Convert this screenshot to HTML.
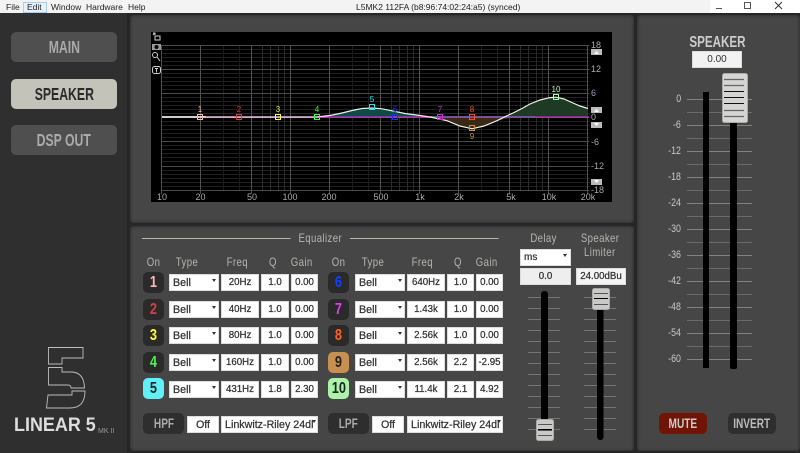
<!DOCTYPE html>
<html><head><meta charset="utf-8"><style>
html,body{margin:0;padding:0;width:800px;height:453px;overflow:hidden;background:#262626}
div{position:absolute;box-sizing:border-box}
body{font-family:"Liberation Sans",sans-serif}
i{font-style:normal;display:inline-block;white-space:nowrap;flex:none}
.m{top:2px;font-size:8.5px;color:#222;line-height:11px}
.panel{background:#464646;box-shadow:inset 0 0 3px #222;border-radius:3px}
.nav{display:flex;justify-content:center;left:11px;width:106px;height:30px;border-radius:5px;background:#4f4f4f;color:#aaa;font:bold 17.5px/30px "Liberation Sans",sans-serif}
.nav i{transform:scaleX(.7)}
.lab{display:flex;justify-content:center;font:12px/12px "Liberation Sans",sans-serif;color:#b5b5b0;letter-spacing:.5px}
.lab i{transform:scaleX(.8)}
.inp{background:#fff;height:17px;font:9.7px/16px "Liberation Sans",sans-serif;color:#333;text-align:center;border:1px solid #ddd;white-space:nowrap;overflow:hidden;-webkit-text-stroke:.25px #333}
.sel{font-size:10.7px;text-align:left;padding-left:3px}
.off{font-size:10.7px}
.ar{width:0;height:0;border-left:2.500px solid transparent;border-right:2.500px solid transparent;border-top:3px solid #333}
.b{display:flex;justify-content:center;width:21px;height:21px;border-radius:5px;background:#2a2a2a;font:bold 16px/21px "Liberation Sans",sans-serif}
.b i{transform:scaleX(.8)}
.bb{display:flex;justify-content:center;height:21px;border-radius:5px;background:#2e2e2e;color:#aaa;font:bold 14px/21px "Liberation Sans",sans-serif}
.bb i{transform:scaleX(.72)}
.sc{font:11px/12px "Liberation Sans",sans-serif;color:#c8c8c8;text-align:right;width:30px;left:651px}
.sc i{transform:scaleX(.8);transform-origin:right}
svg{position:absolute;left:0;top:0}
</style></head><body>
<div style="left:0;top:0;width:800px;height:13px;background:#f3f3f3"></div>
<div style="left:710px;top:0;width:90px;height:13px;background:#fff"></div>
<div style="left:23px;top:2px;width:24px;height:11px;background:#e5f1fb;border:1px solid #a8cdec"></div>
<div class="m" style="left:6px">File</div><div class="m" style="left:27px">Edit</div><div class="m" style="left:51px">Window</div><div class="m" style="left:86px">Hardware</div><div class="m" style="left:128px">Help</div>
<div class="m" style="left:356px;width:150px;white-space:nowrap">L5MK2 112FA (b8:96:74:02:24:a5) (synced)</div>

<div style="left:0;top:13px;width:127px;height:440px;background:#2f2f2f"></div>
<div class="panel" style="left:130px;top:15px;width:504px;height:208px"></div>
<div class="panel" style="left:130px;top:226px;width:504px;height:225px"></div>
<div class="panel" style="left:637px;top:15px;width:163px;height:436px"></div>

<div class="nav" style="top:32px"><i>MAIN</i></div>
<div class="nav" style="top:79px;background:#c4c3b9;color:#2a2a2a"><i>SPEAKER</i></div>
<div class="nav" style="top:125px"><i>DSP OUT</i></div>

<div style="left:151px;top:32px;width:461px;height:170px;background:#000"></div>

<svg width="800" height="453" viewBox="0 0 800 453">
<path d="M716 8.500h6" stroke="#555" fill="none"/>
<rect x="744.500" y="2.500" width="6" height="6" fill="none" stroke="#555"/>
<path d="M775 2l7 7M782 2l-7 7" stroke="#333" fill="none"/>
<path d="M161.500 49.500h428M161.500 53.500h428M161.500 57.500h428M161.500 61.500h428M161.500 65.500h428M161.500 73.500h428M161.500 77.500h428M161.500 81.500h428M161.500 85.500h428M161.500 89.500h428M161.500 97.500h428M161.500 101.500h428M161.500 105.500h428M161.500 109.500h428M161.500 113.500h428M161.500 121.500h428M161.500 125.500h428M161.500 129.500h428M161.500 133.500h428M161.500 137.500h428M161.500 145.500h428M161.500 149.500h428M161.500 153.500h428M161.500 157.500h428M161.500 161.500h428M161.500 170.500h428M161.500 174.500h428M161.500 178.500h428M161.500 182.500h428M161.500 186.500h428" stroke="#1f1f1f" fill="none"/>
<path d="M223.500 45v145M239.500 45v145M352.500 45v145M368.500 45v145M481.500 45v145M497.500 45v145" stroke="#1c1c1c" fill="none"/>
<path d="M262.500 45v145M270.500 45v145M278.500 45v145M284.500 45v145M391.500 45v145M399.500 45v145M407.500 45v145M413.500 45v145M520.500 45v145M528.500 45v145M536.500 45v145M542.500 45v145" stroke="#2a2a2a" fill="none"/>
<path d="M161.500 45.500h428M161.500 69.500h428M161.500 93.500h428M161.500 141.500h428M161.500 166.500h428M161.500 190.500h428" stroke="#4a4a4a" fill="none"/>
<path d="M161.500 45v149M200.500 45v149M251.500 45v149M290.500 45v149M329.500 45v149M380.500 45v149M419.500 45v149M458.500 45v149M509.500 45v149M548.500 45v149M587.500 45v149" stroke="#505050" fill="none"/>
<path d="M316 117.500L330 115.500 342 113 352 110.500 362 108.500 372 108 382 108.800 392 110.800 405 113.500 420 115.500 438 117.500Z" fill="#0d4a48"/>
<path d="M430 117.500L447 120.700 460 126 472 128.800 484 126 497 120.700 512 117.500Z" fill="#3a2815"/>
<path d="M480 117.500L505 116.700 513 113 522 108.500 530 104 540 100 550 97.600 556 97.200 564 99 573 103 580 106 588 108.500V117.500Z" fill="#1f3a24"/>
<path d="M206 117H430M500 117H589" stroke="#777" fill="none"/>
<path d="M430 116.500H535" stroke="#1c8a60" fill="none"/>
<path d="M206 117.500H589" stroke="#d718d7" fill="none"/>
<path d="M162 117H316L330 115.500 342 113 352 110.500 362 108.500 372 108 382 108.800 392 110.800 405 113.500 420 115.500 430 117 447 120.700 460 126 472 128.800 484 126 497 120.700 505 116.700 513 113 522 108.500 530 104 540 100 550 97.600 556 97.200 564 99 573 103 580 106 588 108.500" fill="none" stroke="#e8f2e4" stroke-width="1.200"/>
<path d="M162 117H206" fill="none" stroke="#fff" stroke-width="1.400"/>
<g fill="none" stroke-width="1">
<rect x="197.500" y="114.500" width="5" height="5" stroke="#ffb8b8"/>
<rect x="236.500" y="114.500" width="5" height="5" stroke="#d83a3a"/>
<rect x="275.500" y="114.500" width="5" height="5" stroke="#ffff30"/>
<rect x="314.500" y="114.500" width="5" height="5" stroke="#30ff30"/>
<rect x="369.500" y="104.500" width="5" height="5" stroke="#30e0e8"/>
<rect x="392.500" y="114.500" width="5" height="5" stroke="#1030ff"/>
<rect x="437.500" y="114.500" width="5" height="5" stroke="#e020e0"/>
<rect x="469.500" y="114.500" width="5" height="5" stroke="#ff4a10"/>
<rect x="469.500" y="125.500" width="5" height="5" stroke="#c89050"/>
<rect x="553.500" y="94.500" width="5" height="5" stroke="#a8ffa8"/>
</g>
<g font-family="Liberation Sans,sans-serif" font-size="8" text-anchor="middle">
<text x="200" y="112" fill="#ffb8b8">1</text>
<text x="239" y="112" fill="#d83a3a">2</text>
<text x="278" y="112" fill="#e8e830">3</text>
<text x="317" y="112" fill="#30ff30">4</text>
<text x="372" y="102" fill="#30e0e8">5</text>
<text x="395" y="112" fill="#1030ff">6</text>
<text x="440" y="112" fill="#e020e0">7</text>
<text x="472" y="112" fill="#ff4a10">8</text>
<text x="472" y="139" fill="#c89050">9</text>
<text x="556" y="92" fill="#a8ffa8">10</text>
</g>
<g font-family="Liberation Sans,sans-serif" font-size="9" fill="#aaa" text-anchor="middle">
<text x="162" y="200">10</text><text x="200.500" y="200">20</text><text x="252" y="200">50</text><text x="290" y="200">100</text><text x="329" y="200">200</text><text x="381" y="200">500</text><text x="420" y="200">1k</text><text x="459" y="200">2k</text><text x="511" y="200">5k</text><text x="549" y="200">10k</text><text x="588" y="200">20k</text>
</g>
<g font-family="Liberation Sans,sans-serif" font-size="9" fill="#aaa">
<text x="591" y="48">18</text><text x="591" y="72">12</text><text x="591" y="96" fill="#8fa2b5">6</text><text x="591" y="120">0</text><text x="591" y="145">-6</text><text x="591" y="169">-12</text><text x="591" y="193">-18</text>
</g>
<g><rect x="591" y="49" width="11" height="6" fill="#bbb"/><path d="M594 54h5l-2.500-3z" fill="#fff"/>
<rect x="591" y="107" width="11" height="6" fill="#bbb"/><path d="M594 112h5l-2.500-3z" fill="#fff"/>
<rect x="591" y="122" width="11" height="6" fill="#bbb"/><path d="M594 123h5l-2.500 3z" fill="#fff"/>
<rect x="591" y="179" width="11" height="6" fill="#bbb"/><path d="M594 180h5l-2.500 3z" fill="#fff"/></g>
<g fill="none" stroke="#ccc" stroke-width="1">
<path d="M153 35l2-2M153 33h2v2M155 36h5v4h-5z"/>
<rect x="152" y="44" width="9" height="6" fill="#999" stroke="none"/><circle cx="156.500" cy="47" r="2" fill="#000" stroke="none"/>
<circle cx="155" cy="55" r="2.500"/><path d="M157 57l3 4"/>
<rect x="152.500" y="66.500" width="8" height="7" rx="2"/><path d="M155 68.500h3M156.500 68.500v4"/>
</g>
<g fill="none" stroke="#bdbdbd" stroke-width=".9">
<path d="M48.500 347.500H83V358H62V364H48.500Z"/>
<path d="M48.500 367.500H62V372H71Q84 372 84.500 388H71Q71 385 68 385H48.500Z"/>
<path d="M48 395H72V391H85Q85 408 70 408H46.500Z"/>
</g>
<path d="M142 238.500H290.500M350 238.500H498.500" stroke="#b8b8a8" fill="none"/>
<path d="M528 297.500h32M528 308.500h32M528 319.500h32M528 330.500h32M528 341.500h32M528 352.500h32M528 363.500h32M528 374.500h32M528 385.500h32M528 396.500h32M528 407.500h32M528 418.500h32M528 429.500h32M584 297.500h32M584 308.500h32M584 319.500h32M584 330.500h32M584 341.500h32M584 352.500h32M584 363.500h32M584 374.500h32M584 385.500h32M584 396.500h32M584 407.500h32M584 418.500h32M584 429.500h32" stroke="#747474" fill="none"/>
<rect x="541" y="291" width="7" height="135" rx="3" fill="#000"/>
<rect x="597" y="305" width="6.500" height="135" rx="3" fill="#000"/>
<g><rect x="536.500" y="419.500" width="17" height="21" rx="2" fill="#c9c9c5" stroke="#aaa"/><path d="M538 424.500h14M538 430.500h14M538 435.500h14" stroke="#555"/><path d="M538 429.500h14" stroke="#000"/></g>
<g><rect x="592.500" y="288.500" width="17" height="21" rx="2" fill="#c9c9c5" stroke="#aaa"/><path d="M594 293.500h14M594 304.500h14" stroke="#555"/><path d="M594 298.500h14" stroke="#000"/></g>
<path d="M687 99.500h65M687 125.500h65M687 151.500h65M687 177.500h65M687 203.500h65M687 229.500h65M687 255.500h65M687 281.500h65M687 307.500h65M687 333.500h65M687 359.500h65" stroke="#828282" fill="none"/>
<path d="M687 112.500h65M687 138.500h65M687 164.500h65M687 190.500h65M687 216.500h65M687 242.500h65M687 268.500h65M687 294.500h65M687 320.500h65M687 346.500h65" stroke="#6a6a6a" fill="none"/>
<rect x="703" y="92" width="6" height="276" fill="#000"/>
<rect x="730" y="120" width="7" height="249" rx="2" fill="#000"/>
<rect x="722.500" y="73.500" width="25" height="49" rx="2" fill="#d5d5d2" stroke="#aaa"/>
<path d="M724 79.500h20M724 85.500h20M724 110.500h20M724 116.500h20" stroke="#666" stroke-width="1.300"/>
<path d="M724 91.500h20M724 97.500h20M724 103.500h20" stroke="#111"/>
</svg>

<div style="left:14px;top:415px;width:90px;font:bold 19.5px/20px 'Liberation Sans',sans-serif;color:#ddd;white-space:nowrap"><i style="transform:scaleX(.92);transform-origin:left">LINEAR 5</i></div>
<div style="left:98px;top:428px;font:7px/8px 'Liberation Sans',sans-serif;color:#999;white-space:nowrap">MK II</div>

<div class="lab" style="left:290px;top:232px;width:60px"><i>Equalizer</i></div>
<div class="lab" style="left:143px;top:256px;width:21px"><i>On</i></div>
<div class="lab" style="left:169px;top:256px;width:36px"><i>Type</i></div>
<div class="lab" style="left:217px;top:256px;width:40px"><i>Freq</i></div>
<div class="lab" style="left:261px;top:256px;width:24px"><i>Q</i></div>
<div class="lab" style="left:290px;top:256px;width:24px"><i>Gain</i></div>
<div class="lab" style="left:328px;top:256px;width:21px"><i>On</i></div>
<div class="lab" style="left:355px;top:256px;width:36px"><i>Type</i></div>
<div class="lab" style="left:402px;top:256px;width:40px"><i>Freq</i></div>
<div class="lab" style="left:446px;top:256px;width:24px"><i>Q</i></div>
<div class="lab" style="left:475px;top:256px;width:24px"><i>Gain</i></div>

<div class="b" style="left:143px;top:272px;color:#ffb8b0"><i>1</i></div>
<div class="inp sel" style="left:169px;top:274px;width:50px">Bell</div><div class="ar" style="left:212px;top:279px"></div>
<div class="inp" style="left:221px;top:274px;width:38px">20Hz</div><div class="inp" style="left:261px;top:274px;width:28px">1.0</div><div class="inp" style="left:291px;top:274px;width:27px">0.00</div>
<div class="b" style="left:328px;top:272px;color:#1040ff"><i>6</i></div>
<div class="inp sel" style="left:355px;top:274px;width:50px">Bell</div><div class="ar" style="left:398px;top:279px"></div>
<div class="inp" style="left:407px;top:274px;width:38px">640Hz</div><div class="inp" style="left:447px;top:274px;width:27px">1.0</div><div class="inp" style="left:476px;top:274px;width:27px">0.00</div>

<div class="b" style="left:143px;top:299px;color:#d84040"><i>2</i></div>
<div class="inp sel" style="left:169px;top:301px;width:50px">Bell</div><div class="ar" style="left:212px;top:306px"></div>
<div class="inp" style="left:221px;top:301px;width:38px">40Hz</div><div class="inp" style="left:261px;top:301px;width:28px">1.0</div><div class="inp" style="left:291px;top:301px;width:27px">0.00</div>
<div class="b" style="left:328px;top:299px;color:#e040f0"><i>7</i></div>
<div class="inp sel" style="left:355px;top:301px;width:50px">Bell</div><div class="ar" style="left:398px;top:306px"></div>
<div class="inp" style="left:407px;top:301px;width:38px">1.43k</div><div class="inp" style="left:447px;top:301px;width:27px">1.0</div><div class="inp" style="left:476px;top:301px;width:27px">0.00</div>

<div class="b" style="left:143px;top:325px;color:#ffff30"><i>3</i></div>
<div class="inp sel" style="left:169px;top:327px;width:50px">Bell</div><div class="ar" style="left:212px;top:332px"></div>
<div class="inp" style="left:221px;top:327px;width:38px">80Hz</div><div class="inp" style="left:261px;top:327px;width:28px">1.0</div><div class="inp" style="left:291px;top:327px;width:27px">0.00</div>
<div class="b" style="left:328px;top:325px;color:#ff6020"><i>8</i></div>
<div class="inp sel" style="left:355px;top:327px;width:50px">Bell</div><div class="ar" style="left:398px;top:332px"></div>
<div class="inp" style="left:407px;top:327px;width:38px">2.56k</div><div class="inp" style="left:447px;top:327px;width:27px">1.0</div><div class="inp" style="left:476px;top:327px;width:27px">0.00</div>

<div class="b" style="left:143px;top:352px;color:#50f050"><i>4</i></div>
<div class="inp sel" style="left:169px;top:354px;width:50px">Bell</div><div class="ar" style="left:212px;top:359px"></div>
<div class="inp" style="left:221px;top:354px;width:38px">160Hz</div><div class="inp" style="left:261px;top:354px;width:28px">1.0</div><div class="inp" style="left:291px;top:354px;width:27px">0.00</div>
<div class="b" style="left:328px;top:352px;background:#c89050;color:#222"><i>9</i></div>
<div class="inp sel" style="left:355px;top:354px;width:50px">Bell</div><div class="ar" style="left:398px;top:359px"></div>
<div class="inp" style="left:407px;top:354px;width:38px">2.56k</div><div class="inp" style="left:447px;top:354px;width:27px">2.2</div><div class="inp" style="left:476px;top:354px;width:27px">-2.95</div>

<div class="b" style="left:143px;top:378px;background:#60f0f8;color:#222"><i>5</i></div>
<div class="inp sel" style="left:169px;top:381px;width:50px">Bell</div><div class="ar" style="left:212px;top:386px"></div>
<div class="inp" style="left:221px;top:381px;width:38px">431Hz</div><div class="inp" style="left:261px;top:381px;width:28px">1.8</div><div class="inp" style="left:291px;top:381px;width:27px">2.30</div>
<div class="b" style="left:328px;top:378px;background:#a8f5a8;color:#222"><i>10</i></div>
<div class="inp sel" style="left:355px;top:381px;width:50px">Bell</div><div class="ar" style="left:398px;top:386px"></div>
<div class="inp" style="left:407px;top:381px;width:38px">11.4k</div><div class="inp" style="left:447px;top:381px;width:27px">2.1</div><div class="inp" style="left:476px;top:381px;width:27px">4.92</div>

<div class="bb" style="left:143px;top:413px;width:41px"><i>HPF</i></div>
<div class="inp off" style="left:187px;top:416px;width:32px">Off</div>
<div class="inp sel" style="left:221px;top:416px;width:97px">Linkwitz-Riley 24dl</div><div class="ar" style="left:312px;top:420px"></div>
<div class="bb" style="left:328px;top:413px;width:41px"><i>LPF</i></div>
<div class="inp off" style="left:372px;top:416px;width:32px">Off</div>
<div class="inp sel" style="left:407px;top:416px;width:96px">Linkwitz-Riley 24dl</div><div class="ar" style="left:497px;top:420px"></div>

<div class="lab" style="left:520px;top:232px;width:48px"><i>Delay</i></div>
<div class="lab" style="left:572px;top:232px;width:56px"><i>Speaker</i></div>
<div class="lab" style="left:572px;top:246px;width:56px"><i>Limiter</i></div>
<div class="inp sel" style="left:520px;top:249px;width:51px;font-size:10px">ms</div><div class="ar" style="left:563px;top:254px"></div>
<div class="inp" style="left:520px;top:268px;width:51px;background:#eee">0.0</div>
<div class="inp" style="left:576px;top:268px;width:50px;background:#f4f4f4">24.00dBu</div>

<div style="display:flex;justify-content:center;left:667px;top:34px;width:100px;font:bold 15.5px/18px 'Liberation Sans',sans-serif;color:#ccc"><i style="transform:scaleX(.75)">SPEAKER</i></div>
<div class="inp" style="left:692px;top:51px;width:50px;background:#f2f2f2;font-size:10px;line-height:15px;-webkit-text-stroke:0">0.00</div>

<div class="sc" style="top:93px"><i>0</i></div><div class="sc" style="top:119px"><i>-6</i></div><div class="sc" style="top:145px"><i>-12</i></div><div class="sc" style="top:171px"><i>-18</i></div><div class="sc" style="top:197px"><i>-24</i></div><div class="sc" style="top:223px"><i>-30</i></div><div class="sc" style="top:249px"><i>-36</i></div><div class="sc" style="top:275px"><i>-42</i></div><div class="sc" style="top:301px"><i>-48</i></div><div class="sc" style="top:327px"><i>-54</i></div><div class="sc" style="top:353px"><i>-60</i></div>

<div class="bb" style="left:659px;top:413px;width:48px;background:#701505;color:#ccc"><i>MUTE</i></div>
<div class="bb" style="left:728px;top:413px;width:48px;color:#bbb"><i>INVERT</i></div>
</body></html>
